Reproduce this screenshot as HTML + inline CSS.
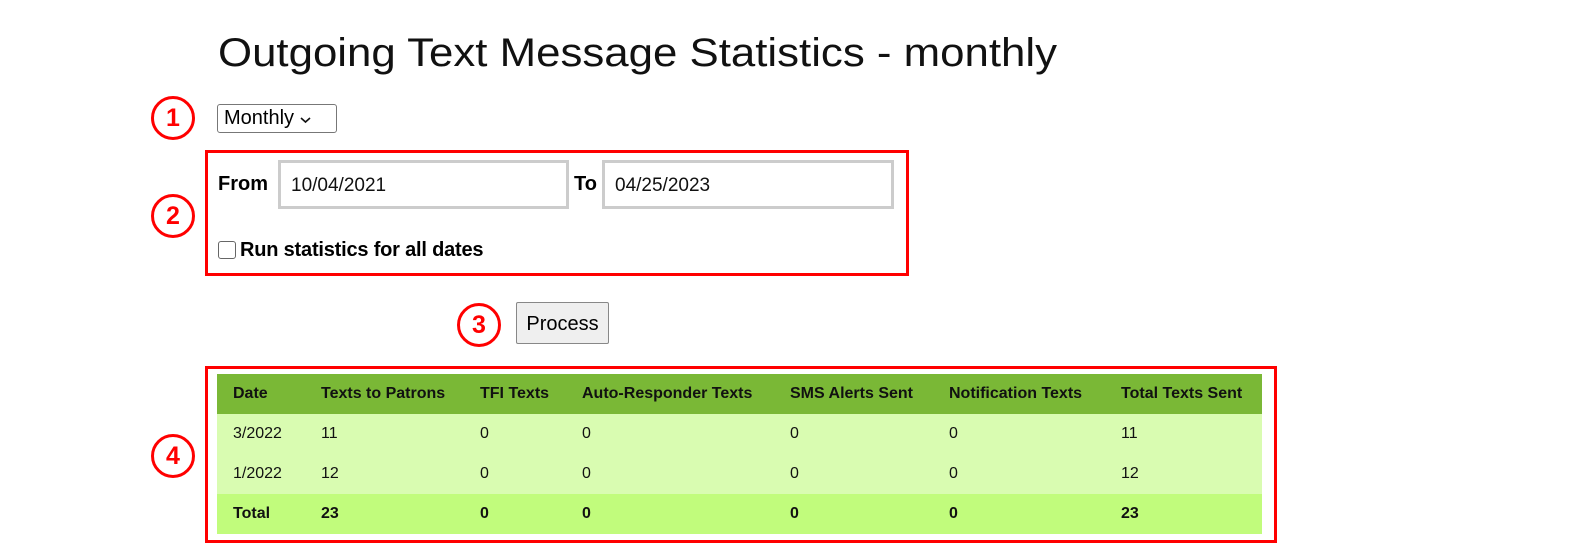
<!DOCTYPE html>
<html><head><meta charset="utf-8"><style>
body{margin:0;width:1574px;height:548px;background:#fff;position:relative;font-family:"Liberation Sans",sans-serif;overflow:hidden}
.a{position:absolute}
.c{position:absolute;width:38px;height:38px;border:3px solid #f00;border-radius:50%;color:#f00;font-weight:bold;font-size:25px;text-align:center;line-height:38px}
.red{position:absolute;border:3px solid #f00;box-sizing:border-box}
.in{position:absolute;border:3px solid #ccc;box-sizing:border-box;font-size:19px;line-height:46px;padding-left:10px;color:#111}
table{position:absolute;left:217px;top:374px;width:1045px;border-collapse:collapse;font-size:16px;color:#111}
td{padding:0 0 0 16px;height:40px}
tr.h{background:#7ab836;font-weight:bold}
tr.r{background:#d9fcb1}
tr.t{background:#c1fc7c;font-weight:bold}
</style></head><body>
<svg class="a" style="left:0;top:0" width="1100" height="80"><text x="218" y="66" font-family="Liberation Sans, sans-serif" font-size="40" fill="#111" textLength="839" lengthAdjust="spacingAndGlyphs">Outgoing Text Message Statistics - monthly</text></svg>
<div class="c" style="left:151px;top:96px">1</div>
<div class="c" style="left:151px;top:194px">2</div>
<div class="c" style="left:457px;top:303px">3</div>
<div class="c" style="left:151px;top:434px">4</div>
<div class="a" style="left:217px;top:104px;width:120px;height:29px;border:1px solid #777;border-radius:3px;box-sizing:border-box;font-size:20px;line-height:27px;padding-left:6px">Monthly <svg width="11" height="8" viewBox="0 0 11 8"><path d="M1 2l4.5 4 4.5-4" fill="none" stroke="#111" stroke-width="1.6"/></svg></div>
<div class="red" style="left:205px;top:150px;width:704px;height:126px"></div>
<div class="a" style="left:218px;top:173px;font-size:20px;font-weight:bold">From</div>
<div class="in" style="left:278px;top:160px;width:291px;height:49px">10/04/2021</div>
<div class="a" style="left:574px;top:173px;font-size:20px;font-weight:bold">To</div>
<div class="in" style="left:602px;top:160px;width:292px;height:49px">04/25/2023</div>
<div class="a" style="left:218px;top:241px;width:18px;height:18px;border:1px solid #666;border-radius:3px;box-sizing:border-box"></div>
<div class="a" style="left:240px;top:239px;font-size:20px;font-weight:bold;letter-spacing:-0.2px">Run statistics for all dates</div>
<div class="a" style="left:516px;top:302px;width:93px;height:42px;border:1px solid #888;border-radius:2px;background:#efefef;box-sizing:border-box;font-size:20px;line-height:42px;text-align:center">Process</div>
<div class="red" style="left:205px;top:366px;width:1072px;height:177px"></div>
<table>
<tr class="h"><td style="width:72px">Date</td><td style="width:143px">Texts to Patrons</td><td style="width:86px">TFI Texts</td><td style="width:192px">Auto-Responder Texts</td><td style="width:143px">SMS Alerts Sent</td><td style="width:156px">Notification Texts</td><td>Total Texts Sent</td></tr>
<tr class="r"><td>3/2022</td><td>11</td><td>0</td><td>0</td><td>0</td><td>0</td><td>11</td></tr>
<tr class="r"><td>1/2022</td><td>12</td><td>0</td><td>0</td><td>0</td><td>0</td><td>12</td></tr>
<tr class="t"><td>Total</td><td>23</td><td>0</td><td>0</td><td>0</td><td>0</td><td>23</td></tr>
</table>
</body></html>
